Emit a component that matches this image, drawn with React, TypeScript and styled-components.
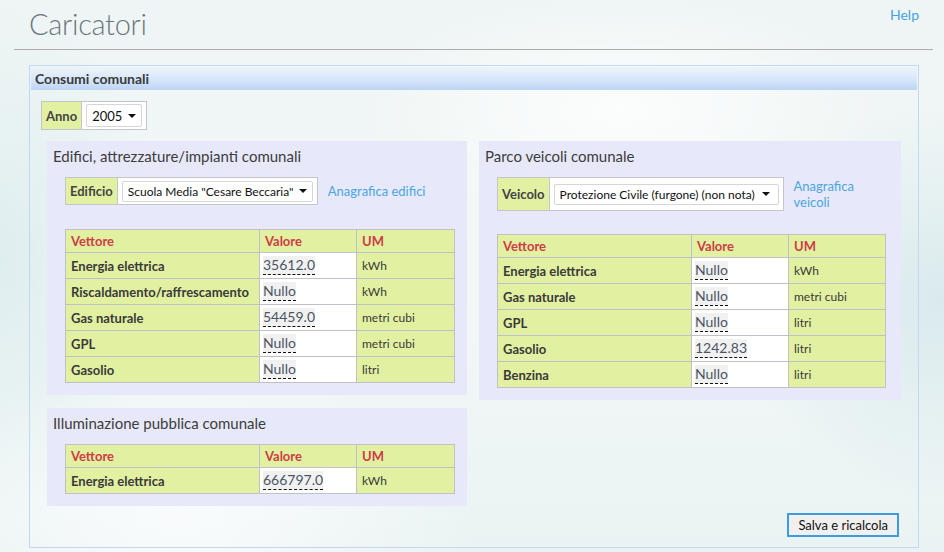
import React from 'react';
import styled, { createGlobalStyle } from 'styled-components';

const GlobalStyle = createGlobalStyle`
  html, body {
    margin: 0;
    padding: 0;
  }
  body {
    width: 944px;
    height: 552px;
    overflow: hidden;
    font-family: Lato, "Open Sans", sans-serif;
    color: #444;
    background:
      radial-gradient(ellipse 260px 120px at 620px 110px, rgba(255,255,255,0.8), rgba(255,255,255,0)),
      radial-gradient(ellipse 300px 160px at 180px 520px, rgba(255,255,255,0.7), rgba(255,255,255,0)),
      radial-gradient(ellipse 200px 200px at 940px 300px, rgba(214,232,236,0.9), rgba(214,232,236,0)),
      radial-gradient(ellipse 160px 260px at 0px 260px, rgba(220,236,238,0.9), rgba(220,236,238,0)),
      linear-gradient(180deg, #eef5f4 0%, #f3f8f7 50%, #eaf3f3 100%);
  }
`;

const Page = styled.div`
  display: flex;
  flex-direction: column;
`;

const Header = styled.div`
  display: flex;
  justify-content: space-between;
  align-items: flex-start;
  height: 49px;
  margin: 0 11px 0 14px;
  padding: 0 14px 0 15px;
  border-bottom: 1px solid #adadad;
`;

const PageTitle = styled.h1`
  margin: 6px 0 0 0;
  font-size: 29px;
  font-weight: 300;
  color: #6c757d;
  letter-spacing: -0.3px;
`;

const HelpLink = styled.a`
  margin-top: 6px;
  font-size: 14px;
  color: #45a3e3;
  text-decoration: none;
`;

const Panel = styled.div`
  margin: 15px 0 0 29px;
  width: 890px;
  height: 483px;
  border: 1px solid #c2d8f4;
  padding: 1px 0 0 0;
  box-sizing: border-box;
  display: flex;
  flex-direction: column;
`;

const PanelHeader = styled.div`
  height: 23px;
  margin: 0 1px;
  padding-left: 4px;
  display: flex;
  align-items: center;
  font-size: 14px;
  font-weight: 700;
  color: #3a3a3a;
  background: linear-gradient(180deg, #eef4fe 0%, #d7e6fb 55%, #bcd5f5 100%);
`;

const PanelBody = styled.div`
  padding: 11px 0 0 11px;
  display: flex;
  flex-direction: column;
`;

const PickerStrip = styled.div`
  display: flex;
`;

const Picker = styled.div<{ $h: number }>`
  display: flex;
  align-items: stretch;
  box-sizing: border-box;
  border: 1px solid #c4c4cc;
  background: #fff;
  height: ${(p) => p.$h}px;
`;

const PickerLabel = styled.div`
  display: flex;
  align-items: center;
  padding: 0 4px;
  background: #e2f0a2;
  border-right: 1px solid #c4c4cc;
  font-size: 13px;
  font-weight: 700;
  color: #444;
`;

const PickerCell = styled.div`
  display: flex;
  align-items: center;
  padding: 0 4px;
`;

const FakeSelect = styled.div<{ $w: number }>`
  width: ${(p) => p.$w}px;
  height: 21px;
  box-sizing: border-box;
  border: 1px solid #d6d6d6;
  border-radius: 2px;
  background: #fff;
  display: flex;
  align-items: center;
  justify-content: space-between;
  padding: 0 8px 0 5px;
  font-size: 12px;
  color: #111;
  white-space: nowrap;
  &::after {
    content: '';
    border-left: 4px solid transparent;
    border-right: 4px solid transparent;
    border-top: 4px solid #111;
    margin-left: 6px;
  }
`;

const YearSelect = styled(FakeSelect)`
  height: 23px;
  font-size: 13px;
`;

const Columns = styled.div`
  display: flex;
  align-items: flex-start;
  gap: 12px;
  margin: 11px 0 0 6px;
`;

const Column = styled.div`
  display: flex;
  flex-direction: column;
  gap: 13px;
`;

const Section = styled.div<{ $w: number }>`
  width: ${(p) => p.$w}px;
  box-sizing: border-box;
  background: #e7e9fa;
  padding: 0 12px 12px 18px;
`;

const SectionTitle = styled.h2`
  margin: 0 0 0 -12px;
  height: 36px;
  display: flex;
  align-items: center;
  padding-bottom: 6px;
  box-sizing: border-box;
  font-size: 15px;
  font-weight: 400;
  color: #3c3c3c;
`;

const PickerRow = styled.div<{ $gap: number }>`
  display: flex;
  align-items: flex-start;
  gap: 10px;
  margin-bottom: ${(p) => p.$gap}px;
`;

const SideLink = styled.a<{ $w?: number; $top: number }>`
  font-size: 13px;
  color: #4aa6e0;
  text-decoration: none;
  line-height: 16px;
  margin-top: ${(p) => p.$top}px;
  ${(p) => (p.$w ? `width: ${p.$w}px;` : '')}
`;

const Table = styled.table<{ $w: number }>`
  width: ${(p) => p.$w}px;
  table-layout: fixed;
  border-collapse: collapse;
  border: 1px solid #c0c0c8;
  font-size: 13px;
`;

const Th = styled.th`
  height: 22px;
  padding: 0 5px;
  text-align: left;
  background: #e2f0a2;
  color: #cc3d46;
  font-weight: 700;
  border: 1px solid #c0c0c8;
`;

const Td = styled.td<{ $white?: boolean; $small?: boolean }>`
  height: 25px;
  padding: 0 5px;
  background: ${(p) => (p.$white ? '#fff' : '#e2f0a2')};
  border: 1px solid #c0c0c8;
  font-weight: ${(p) => (p.$small ? 400 : 700)};
  font-size: ${(p) => (p.$small ? '12px' : '13px')};
  color: #3a3a3a;
  padding-left: ${(p) => (p.$white ? '3px' : '5px')};
  white-space: nowrap;
`;

const Value = styled.span`
  display: inline-block;
  background: #f1f1f1;
  color: #4b5566;
  font-size: 14px;
  font-weight: 400;
  line-height: 18px;
  border-bottom: 1px dashed #111;
`;

const Footer = styled.div`
  display: flex;
  justify-content: flex-end;
  padding: 7px 19px 0 0;
`;

const SaveButton = styled.button`
  height: 24px;
  padding: 0 9px;
  border: 2px solid #3d9be0;
  background: #f0f0f0;
  font-family: Lato, "Open Sans", sans-serif;
  font-size: 13px;
  color: #111;
`;

type Row = { name: string; value: string; um: string };

const edifici: Row[] = [
  { name: 'Energia elettrica', value: '35612.0', um: 'kWh' },
  { name: 'Riscaldamento/raffrescamento', value: 'Nullo', um: 'kWh' },
  { name: 'Gas naturale', value: '54459.0', um: 'metri cubi' },
  { name: 'GPL', value: 'Nullo', um: 'metri cubi' },
  { name: 'Gasolio', value: 'Nullo', um: 'litri' },
];

const veicoli: Row[] = [
  { name: 'Energia elettrica', value: 'Nullo', um: 'kWh' },
  { name: 'Gas naturale', value: 'Nullo', um: 'metri cubi' },
  { name: 'GPL', value: 'Nullo', um: 'litri' },
  { name: 'Gasolio', value: '1242.83', um: 'litri' },
  { name: 'Benzina', value: 'Nullo', um: 'litri' },
];

const illuminazione: Row[] = [{ name: 'Energia elettrica', value: '666797.0', um: 'kWh' }];

const DataTable: React.FC<{ rows: Row[]; width: number }> = ({ rows, width }) => (
  <Table $w={width}>
    <colgroup>
      <col style={{ width: 194 }} />
      <col style={{ width: 97 }} />
      <col />
    </colgroup>
    <thead>
      <tr>
        <Th>Vettore</Th>
        <Th>Valore</Th>
        <Th>UM</Th>
      </tr>
    </thead>
    <tbody>
      {rows.map((r) => (
        <tr key={r.name}>
          <Td>{r.name}</Td>
          <Td $white>
            <Value>{r.value}</Value>
          </Td>
          <Td $small>{r.um}</Td>
        </tr>
      ))}
    </tbody>
  </Table>
);

const App: React.FC = () => {
  return (
    <Page>
      <GlobalStyle />
      <Header>
        <PageTitle>Caricatori</PageTitle>
        <HelpLink href="#">Help</HelpLink>
      </Header>
      <Panel>
        <PanelHeader>Consumi comunali</PanelHeader>
        <PanelBody>
          <PickerStrip>
            <Picker $h={29}>
              <PickerLabel>Anno</PickerLabel>
              <PickerCell>
                <YearSelect $w={56}>2005</YearSelect>
              </PickerCell>
            </Picker>
          </PickerStrip>
          <Columns>
            <Column>
              <Section $w={420}>
                <SectionTitle>Edifici, attrezzature/impianti comunali</SectionTitle>
                <PickerRow $gap={24}>
                  <Picker $h={28}>
                    <PickerLabel>Edificio</PickerLabel>
                    <PickerCell>
                      <FakeSelect $w={191}>Scuola Media "Cesare Beccaria"</FakeSelect>
                    </PickerCell>
                  </Picker>
                  <SideLink href="#" $top={6}>
                    Anagrafica edifici
                  </SideLink>
                </PickerRow>
                <DataTable rows={edifici} width={390} />
              </Section>
              <Section $w={420}>
                <SectionTitle>Illuminazione pubblica comunale</SectionTitle>
                <DataTable rows={illuminazione} width={390} />
              </Section>
            </Column>
            <Column>
              <Section $w={422}>
                <SectionTitle>Parco veicoli comunale</SectionTitle>
                <PickerRow $gap={23}>
                  <Picker $h={34}>
                    <PickerLabel>Veicolo</PickerLabel>
                    <PickerCell>
                      <FakeSelect $w={225}>Protezione Civile (furgone) (non nota)</FakeSelect>
                    </PickerCell>
                  </Picker>
                  <SideLink href="#" $w={70} $top={1}>
                    Anagrafica veicoli
                  </SideLink>
                </PickerRow>
                <DataTable rows={veicoli} width={389} />
              </Section>
            </Column>
          </Columns>
          <Footer>
            <SaveButton>Salva e ricalcola</SaveButton>
          </Footer>
        </PanelBody>
      </Panel>
    </Page>
  );
};

export default App;
